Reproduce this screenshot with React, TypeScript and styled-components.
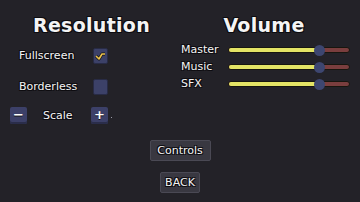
import * as React from 'react';
import styled, { createGlobalStyle } from 'styled-components';

const GlobalStyle = createGlobalStyle`
  html, body {
    margin: 0;
    padding: 0;
    background: #232228;
  }
`;

const outline = `1px 1px 0 #0d0c10, -1px 1px 0 #0d0c10, 1px -1px 0 #0d0c10, -1px -1px 0 #0d0c10`;

const Screen = styled.div`
  width: 360px;
  height: 202px;
  box-sizing: border-box;
  padding-top: 12px;
  background: #232228;
  color: #f4f4f4;
  font-family: 'DejaVu Sans', sans-serif;
  overflow: hidden;
  display: flex;
  flex-direction: column;
`;

const Columns = styled.div`
  display: grid;
  grid-template-columns: 180px 180px;
`;

const Column = styled.div`
  display: flex;
  flex-direction: column;
`;

const Title = styled.h1<{ $width: number }>`
  margin: 0;
  width: ${p => p.$width}px;
  font-size: 19px;
  line-height: 26px;
  font-weight: bold;
  text-align: center;
  letter-spacing: 0.3px;
  text-shadow: ${outline};
`;

const Label = styled.span<{ $width: number }>`
  width: ${p => p.$width}px;
  font-size: 11px;
  line-height: 14px;
  text-shadow: ${outline};
`;

const OptionRow = styled.div<{ $top: number }>`
  display: flex;
  align-items: center;
  margin-top: ${p => p.$top}px;
  padding-left: 19px;
`;

const Checkbox = styled.div`
  width: 15px;
  height: 16px;
  box-sizing: border-box;
  background: #3c4168;
  border: 1px solid #282b45;
  border-radius: 2px;
  display: flex;
  align-items: center;
  justify-content: center;
`;

const ScaleRow = styled.div`
  display: flex;
  align-items: center;
  margin-top: 12px;
  padding-left: 10px;
`;

const StepButton = styled.div`
  width: 17px;
  height: 17px;
  box-sizing: border-box;
  background: #3c4068;
  border-radius: 2px;
  box-shadow: inset 0 -2px 0 #2a2d4a;
  display: flex;
  align-items: center;
  justify-content: center;
  color: #ffffff;
  font-size: 13px;
  font-weight: bold;
  line-height: 1;
  padding-bottom: 2px;
  text-shadow: 0 1px 0 #111;
`;

const ScaleLabel = styled.span`
  width: 47px;
  margin-left: 16px;
  margin-right: 1px;
  font-size: 11px;
  line-height: 14px;
  text-shadow: ${outline};
`;

const Dot = styled.span`
  width: 1px;
  height: 1px;
  margin: 4px 0 0 3px;
  background: #9a9aa6;
`;

const SliderRow = styled.div<{ $top: number }>`
  display: flex;
  align-items: center;
  margin-top: ${p => p.$top}px;
  padding-left: 1px;
`;

const Track = styled.div`
  position: relative;
  width: 122px;
  height: 6px;
  box-sizing: border-box;
  border: 1px solid #17160f;
  border-radius: 3px;
  background: #7a3e3e;
  display: flex;
`;

const Fill = styled.div`
  height: 100%;
  border-radius: 2px 0 0 2px;
  background: #e4e465;
`;

const Handle = styled.div`
  position: absolute;
  top: 50%;
  width: 11px;
  height: 11px;
  margin: -5.5px 0 0 -5.5px;
  border-radius: 50%;
  background: #3d4670;
`;

const Footer = styled.div`
  display: flex;
  flex-direction: column;
  align-items: center;
  margin-top: 16px;
  gap: 11px;
`;

const MenuButton = styled.div<{ $width: number }>`
  width: ${p => p.$width}px;
  height: 21px;
  box-sizing: border-box;
  background: #393841;
  border: 1px solid #4a4954;
  border-radius: 2px;
  display: flex;
  align-items: center;
  justify-content: center;
  font-size: 11px;
  text-shadow: ${outline};
`;

function Check() {
  return (
    <svg width="11" height="9" viewBox="0 0 11 9">
      <polyline
        points="1,4 4,7 7,2 10,2"
        fill="none"
        stroke="#111"
        strokeWidth="3"
        strokeLinejoin="round"
      />
      <polyline
        points="1,4 4,7 7,2 10,2"
        fill="none"
        stroke="#ecc24e"
        strokeWidth="1.6"
        strokeLinejoin="round"
      />
    </svg>
  );
}

function Slider({ value }: { value: number }) {
  return (
    <Track>
      <Fill style={{ width: `${value * 100}%` }} />
      <Handle style={{ left: `${value * 100}%` }} />
    </Track>
  );
}

const volumes = [
  { name: 'Master', value: 0.75, top: 5 },
  { name: 'Music', value: 0.75, top: 3 },
  { name: 'SFX', value: 0.75, top: 3 },
];

export default function App() {
  return (
    <Screen>
      <GlobalStyle />
      <Columns>
        <Column>
          <Title $width={183}>Resolution</Title>
          <OptionRow $top={10}>
            <Label $width={74}>Fullscreen</Label>
            <Checkbox>
              <Check />
            </Checkbox>
          </OptionRow>
          <OptionRow $top={15}>
            <Label $width={74}>Borderless</Label>
            <Checkbox />
          </OptionRow>
          <ScaleRow>
            <StepButton>−</StepButton>
            <ScaleLabel>Scale</ScaleLabel>
            <StepButton>+</StepButton>
            <Dot />
          </ScaleRow>
        </Column>
        <Column>
          <Title $width={168}>Volume</Title>
          {volumes.map(v => (
            <SliderRow key={v.name} $top={v.top}>
              <Label $width={47}>{v.name}</Label>
              <Slider value={v.value} />
            </SliderRow>
          ))}
        </Column>
      </Columns>
      <Footer>
        <MenuButton $width={61}>Controls</MenuButton>
        <MenuButton $width={40}>BACK</MenuButton>
      </Footer>
    </Screen>
  );
}
